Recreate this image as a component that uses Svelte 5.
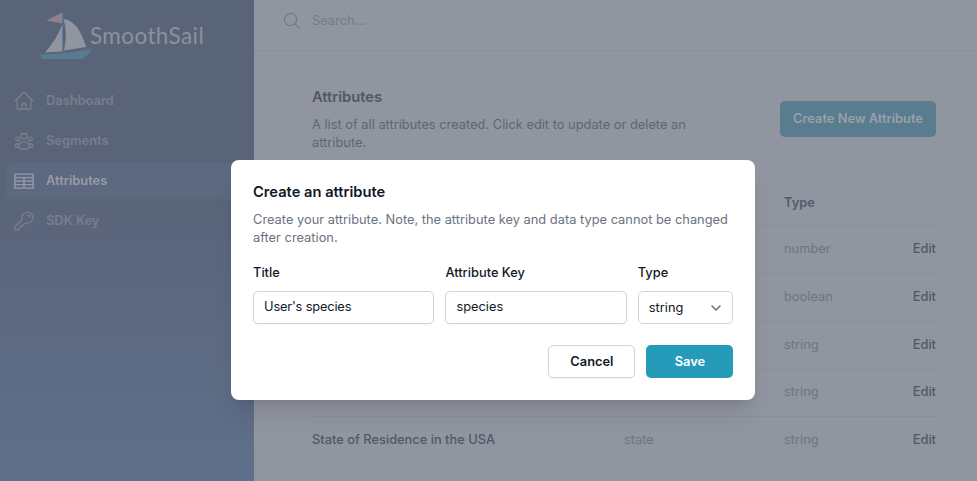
<script>
  const nav = ['Dashboard', 'Segments', 'Attributes', 'SDK Key'];
  const rows = [
    ['', '', 'number'],
    ['', '', 'boolean'],
    ['', '', 'string'],
    ['', '', 'string'],
    ['State of Residence in the USA', 'state', 'string']
  ];
</script>

<div class="app">
  <aside>
    <div class="brand">
      <svg class="boat" width="54" height="52" viewBox="0 0 54 52">
        <path d="M6.5 9.5 22.5 1.5V12.5Z" fill="#94808b" />
        <path d="M22.5 13V40.500L5 41.500Q17 28 22.500 13Z" fill="#9095a0" />
        <path d="M23.500 8Q38 9 46 36L24 39.500Q28 22 23.500 8Z" fill="#9095a0" />
        <path d="M0 43.500Q26 43 51 38Q49 45 42 48H2.500Q1 46 0 43.500Z" fill="#587b90" />
        <path d="M22.700 1V41" stroke="#587b90" stroke-width="1.200" />
      </svg>
      <span class="name">SmoothSail</span>
    </div>
    <nav>
      {#each nav as item, i}
        <a class:active={i === 2}>
          <svg width="22" height="22" viewBox="0 0 24 24" fill="none" stroke="currentColor" stroke-width="1.5" stroke-linecap="round" stroke-linejoin="round">
            {#if i === 0}
              <path d="m2.25 12 8.954-8.955c.44-.439 1.152-.439 1.591 0L21.75 12M4.5 9.75v10.125c0 .621.504 1.125 1.125 1.125H9.75v-4.875c0-.621.504-1.125 1.125-1.125h2.25c.621 0 1.125.504 1.125 1.125V21h4.125c.621 0 1.125-.504 1.125-1.125V9.75M8.25 21h8.25" />
            {:else if i === 1}
              <path d="M18 18.72a9.094 9.094 0 003.741-.479 3 3 0 00-4.682-2.72m.94 3.198l.001.031c0 .225-.012.447-.037.666A11.944 11.944 0 0112 21c-2.17 0-4.207-.576-5.963-1.584A6.062 6.062 0 016 18.719m12 0a5.971 5.971 0 00-.941-3.197m0 0A5.995 5.995 0 0012 12.75a5.995 5.995 0 00-5.058 2.772m0 0a3 3 0 00-4.681 2.72 8.986 8.986 0 003.74.477m.94-3.197a5.971 5.971 0 00-.94 3.197M15 6.75a3 3 0 11-6 0 3 3 0 016 0zm6 3a2.25 2.25 0 11-4.5 0 2.25 2.25 0 014.5 0zm-13.5 0a2.25 2.25 0 11-4.5 0 2.25 2.25 0 014.5 0z" />
            {:else if i === 2}
              <path d="M2 4.5h20v15.3h-20zM2 8.3h20M2 12.100h20M2 16h20M12 8.3v11.500" />
            {:else}
              <path d="M15.75 5.25a3 3 0 013 3m3 0a6 6 0 01-7.029 5.912c-.563-.097-1.159.026-1.563.43L10.5 17.25H8.25v2.25H6v2.25H2.25v-2.818c0-.597.237-1.17.659-1.591l6.499-6.499c.404-.404.527-1 .43-1.563A6 6 0 1121.75 8.25z" />
            {/if}
          </svg>
          <span>{item}</span>
        </a>
      {/each}
    </nav>
  </aside>

  <main>
    <header>
      <svg width="18" height="18" viewBox="0 0 18 18" fill="none" stroke="#737a89" stroke-width="1.2" stroke-linecap="round"><circle cx="7.5" cy="7.5" r="6.2" /><path d="m12 12 4.2 4.2" /></svg>
      <span>Search...</span>
    </header>
    <section class="intro">
      <div>
        <h1>Attributes</h1>
        <p>A list of all attributes created. Click edit to update or delete an<br />attribute.</p>
      </div>
      <button class="create">Create New Attribute</button>
    </section>
    <section class="table">
      <div class="row head"><span></span><span></span><span>Type</span><span></span></div>
      {#each rows as [title, key, type]}
        <div class="row"><span class="title">{title}</span><span>{key}</span><span>{type}</span><span class="edit">Edit</span></div>
      {/each}
    </section>
  </main>

  <div class="modal">
    <h2>Create an attribute</h2>
    <p>Create your attribute. Note, the attribute key and data type cannot be changed<br />after creation.</p>
    <div class="fields">
      <label class="wide"><span>Title</span><div class="input tight">User's species</div></label>
      <label class="wide"><span>Attribute Key</span><div class="input">species</div></label>
      <label class="type"><span>Type</span><div class="input select">string
        <svg width="12" height="8" viewBox="0 0 12 8" fill="none" stroke="#6b7280" stroke-width="1.6" stroke-linecap="round" stroke-linejoin="round"><path d="m2 2 4 4 4-4" /></svg></div></label>
    </div>
    <div class="actions"><button class="cancel">Cancel</button><button class="save">Save</button></div>
  </div>
</div>

<style>
  :global(body) { margin: 0; background: #9095a0; }
  * { box-sizing: border-box; }
  .app { position: relative; display: flex; width: 975px; height: 481px; overflow: hidden; background: #9095a0; font-family: Inter, sans-serif; font-size: 12.85px; line-height: 18px; color: #6b7280; white-space: nowrap; }
  aside { width: 254px; flex: none; background: linear-gradient(#5a6478 0, #5a6479 190px, #5f6f8b 481px); }
  .brand { display: flex; height: 82px; padding: 11px 0 0 40px; }
  .boat { flex: none; }
  .name { margin: 9px 0 0 -4px; font: 400 22.5px/32px Lato, sans-serif; letter-spacing: 0.4px; color: #8c919d; }
  nav { display: flex; flex-direction: column; gap: 4px; padding: 1px 7px 0 6px; }
  nav a { display: flex; align-items: center; gap: 11px; height: 36px; padding-left: 7px; border-radius: 6px; font-weight: 600; color: #777e8c; }
  nav a span { padding-bottom: 1px; }
  nav a.active { background: #5d6980; color: #979ba6; }
  nav svg { flex: none; }
  main { flex: 1; }
  header { display: flex; align-items: center; gap: 11px; height: 51px; padding: 0 0 9px 29px; border-bottom: 1px solid #8a8f9b; color: #747b89; }
  .intro { display: flex; justify-content: space-between; padding: 36px 39px 0 58px; }
  h1 { margin: 0; font-size: 14.7px; line-height: 20px; font-weight: 600; color: #505768; }
  p { margin: 9px 0 0; }
  .intro p { color: #5e6674; }
  button { font: 600 12.85px/18px Inter, sans-serif; border: 0; border-radius: 5px; padding: 0; }
  .create { width: 156px; height: 36px; margin-top: 14px; background: #597d8f; color: #9a9faa; }
  .table { padding: 27.5px 39px 0 58px; }
  .row { display: grid; grid-template-columns: 312px 160px 1fr auto; align-items: center; height: 47.8px; padding-bottom: 1.2px; border-bottom: 1px solid #8a8f9b; color: #6d7482; }
  .row:last-child { border: 0; padding-bottom: 2px; }
  .head { color: #535b6b; font-weight: 600; height: 46.8px; padding: 1px 0 0; }
  .title, .edit { color: #505868; font-weight: 500; }
  .modal { position: absolute; left: 231px; top: 160px; width: 524.4px; height: 240px; padding: 22px; background: #fff; border-radius: 8px; box-shadow: 0 18px 23px -5px #0000001a, 0 7px 9px -6px #0000001a; }
  h2 { margin: 0; font-size: 14.7px; line-height: 20px; font-weight: 600; color: #111827; }
  .modal p { margin-top: 9px; color: #6b7280; }
  .fields { display: flex; gap: 11px; margin-top: 17px; color: #111827; }
  .wide { width: 181.4px; }
  .type { width: 95px; }
  label > span { display: block; font-weight: 500; }
  .input { height: 33px; margin-top: 9px; padding: 0 10px; border: 1px solid #d1d5db; border-radius: 5px; line-height: 30px; box-shadow: 0 1px 2px #0000000d; }
  .tight { letter-spacing: -0.18px; }
  .select { display: flex; align-items: center; justify-content: space-between; box-shadow: none; }
  .actions { display: flex; justify-content: flex-end; gap: 11px; margin-top: 21px; }
  .actions button { width: 87px; height: 33px; }
  .cancel { background: #fff; border: 1px solid #d1d5db; color: #111827; box-shadow: 0 1px 2px #0000000d; }
  .save { background: #249cb9; color: #fff; }
</style>
